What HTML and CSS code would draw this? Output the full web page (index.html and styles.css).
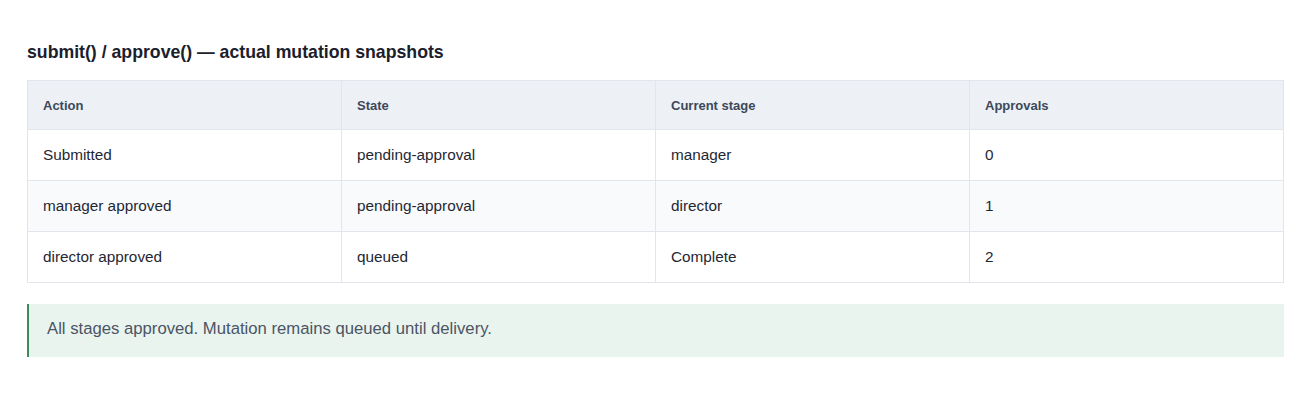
FILE: index.html
```html
<!DOCTYPE html>
<html>
<head>
<meta charset="utf-8">
<link rel="stylesheet" href="styles.css">
</head>
<body>
<div class="page">
  <h2 class="title">submit() / approve() — actual mutation snapshots</h2>
  <table class="snap">
    <thead>
      <tr><th>Action</th><th>State</th><th>Current stage</th><th>Approvals</th></tr>
    </thead>
    <tbody>
      <tr><td>Submitted</td><td>pending-approval</td><td>manager</td><td>0</td></tr>
      <tr><td>manager approved</td><td>pending-approval</td><td>director</td><td>1</td></tr>
      <tr><td>director approved</td><td>queued</td><td>Complete</td><td>2</td></tr>
    </tbody>
  </table>
  <div class="notice">All stages approved. Mutation remains queued until delivery.</div>
</div>
</body>
</html>
```
FILE: styles.css
```css
html, body {
  margin: 0;
  padding: 0;
  background: #ffffff;
}
body {
  font-family: "Liberation Sans", Arial, Helvetica, sans-serif;
  color: #1f2733;
}
.page {
  padding: 42px 27px 0 27px;
}
.title {
  margin: 0 0 18px 0;
  font-size: 17.7px;
  font-weight: 700;
  line-height: 20px;
  color: #1a202c;
}
.snap {
  width: 100%;
  border-collapse: collapse;
  table-layout: fixed;
  border: 1px solid #e1e6ec;
}
.snap th, .snap td {
  border: 1px solid #e1e6ec;
  text-align: left;
  padding: 0 15px;
}
.snap th {
  background: #edf1f6;
  font-size: 13px;
  font-weight: 700;
  color: #3c4859;
  height: 48px;
}
.snap td {
  font-size: 15.3px;
  color: #1f2733;
  height: 50px;
}
.snap tbody tr:nth-child(2) td {
  background: #f8fafc;
}
.notice {
  margin-top: 21px;
  background: #eaf4ee;
  border-left: 2px solid #3d8a5c;
  padding: 0 18px;
  height: 53px;
  line-height: 49px;
  font-size: 16.7px;
  color: #4b5565;
}
```
